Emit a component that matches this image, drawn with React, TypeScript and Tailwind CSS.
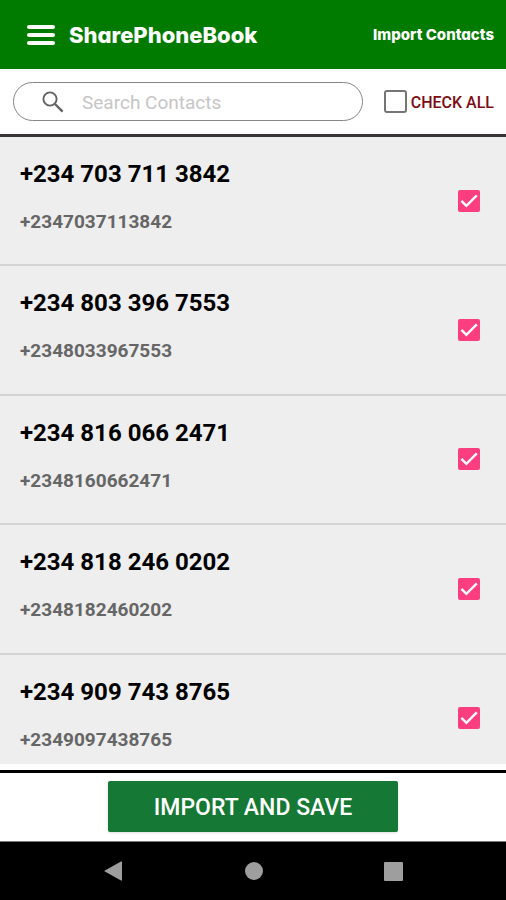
import { useState } from "react";

const contacts = [
  { name: "+234 703 711 3842", phone: "+2347037113842" },
  { name: "+234 803 396 7553", phone: "+2348033967553" },
  { name: "+234 816 066 2471", phone: "+2348160662471" },
  { name: "+234 818 246 0202", phone: "+2348182460202" },
  { name: "+234 909 743 8765", phone: "+2349097438765" },
];

function Header() {
  return (
    <header className="flex h-[69px] shrink-0 items-center bg-[#007b00] pr-3 pl-[27px] font-['Inter',sans-serif] font-extrabold text-white [font-feature-settings:'cv11']">
      <button type="button" aria-label="Menu" className="mr-3.5 flex w-7 flex-col gap-1">
        <span className="h-1 w-full rounded-sm bg-white" />
        <span className="h-1 w-full rounded-sm bg-white" />
        <span className="h-1 w-full rounded-sm bg-white" />
      </button>
      <h1 className="text-[22px] leading-8">SharePhoneBook</h1>
      <a href="#import" className="ml-auto text-[15px] leading-8">
        Import Contacts
      </a>
    </header>
  );
}

function SearchBar({ allChecked, onToggleAll }: { allChecked: boolean; onToggleAll: () => void }) {
  return (
    <div className="flex h-[68px] shrink-0 items-center border-b-3 border-[#383435] pr-3 pl-[13px]">
      <label className="flex h-[39px] min-w-0 flex-1 items-center rounded-full border border-[#858585] pr-4 pl-7">
        <svg viewBox="0 0 22 22" className="mr-[18px] h-[22px] w-[22px] shrink-0" fill="none" stroke="#616161" aria-hidden="true">
          <circle cx="8" cy="8" r="6.6" strokeWidth="1.9" />
          <path d="M13 13l7.6 7.6" strokeWidth="2.4" />
        </svg>
        <input
          type="text"
          aria-label="Search Contacts"
          placeholder="Search Contacts"
          className="min-w-0 flex-1 bg-transparent pt-0.5 text-[19px] leading-6 outline-none placeholder:text-[#c6c6c6]"
        />
      </label>
      <label className="ml-[21px] flex items-center gap-1 text-base font-medium text-[#7d0c14]">
        <input
          type="checkbox"
          checked={allChecked}
          onChange={onToggleAll}
          className="h-[23px] w-[23px] appearance-none rounded-[3px] border-2 border-[#757575] checked:bg-[#ff4081]"
        />
        <span className="pt-0.5">CHECK ALL</span>
      </label>
    </div>
  );
}

function ContactRow({ name, phone }: { name: string; phone: string }) {
  const [checked, setChecked] = useState(true);
  return (
    <li className="border-b-2 border-[#d3d3d3] bg-[#eeeeee]">
      <label className="flex h-full items-center justify-between pr-[26px] pl-5">
        <span className="flex h-full flex-col gap-5 pt-[21px]">
          <span className="text-2xl leading-8 font-bold text-black">{name}</span>
          <span className="text-[19px] leading-6 font-bold text-[#666666]">{phone}</span>
        </span>
        <span className="grid h-[22px] w-[22px]">
          <input
            type="checkbox"
            checked={checked}
            onChange={() => setChecked(!checked)}
            className="col-start-1 row-start-1 appearance-none rounded-[2px] border-2 border-[#757575] checked:border-[#fc3d7f] checked:bg-[#fc3d7f]"
          />
          {checked && (
            <svg viewBox="0 0 22 22" className="pointer-events-none col-start-1 row-start-1" fill="none" stroke="#fff" strokeWidth="2.4" aria-hidden="true">
              <path d="M3.4 10.8l5 5L18.8 5.4" />
            </svg>
          )}
        </span>
      </label>
    </li>
  );
}

function SystemBar() {
  return (
    <nav className="flex h-[59px] shrink-0 items-center justify-around border-t border-[#777777] bg-black px-[43px]">
      <button type="button" aria-label="Back">
        <svg viewBox="0 0 20 22" className="h-[22px] w-5" fill="#9e9e9e">
          <path d="M0 11L17 1.4Q18 1 18 2v18q0 1-1 .6z" />
        </svg>
      </button>
      <button type="button" aria-label="Home" className="h-[18px] w-[18px] rounded-full bg-[#9e9e9e]" />
      <button type="button" aria-label="Recent apps" className="h-[19px] w-[19px] rounded-[1px] bg-[#9e9e9e]" />
    </nav>
  );
}

export default function App() {
  const [allChecked, setAllChecked] = useState(false);
  return (
    <div className="flex h-screen flex-col bg-white font-['Roboto',sans-serif]">
      <Header />
      <SearchBar allChecked={allChecked} onToggleAll={() => setAllChecked(!allChecked)} />
      <main className="min-h-0 flex-1 overflow-y-auto [scrollbar-width:none]">
        <ul className="grid min-h-[647px] auto-rows-fr">
          {contacts.map((contact) => (
            <ContactRow key={contact.phone} {...contact} />
          ))}
        </ul>
      </main>
      <footer className="mt-1.5 flex shrink-0 justify-center border-t-3 border-black pt-2 pb-[9px]">
        <button
          type="button"
          className="h-[51px] rounded-[2px] bg-[#157835] px-[46px] pt-0.5 text-[23px] leading-8 font-medium text-white shadow-sm"
        >
          IMPORT AND SAVE
        </button>
      </footer>
      <SystemBar />
    </div>
  );
}
